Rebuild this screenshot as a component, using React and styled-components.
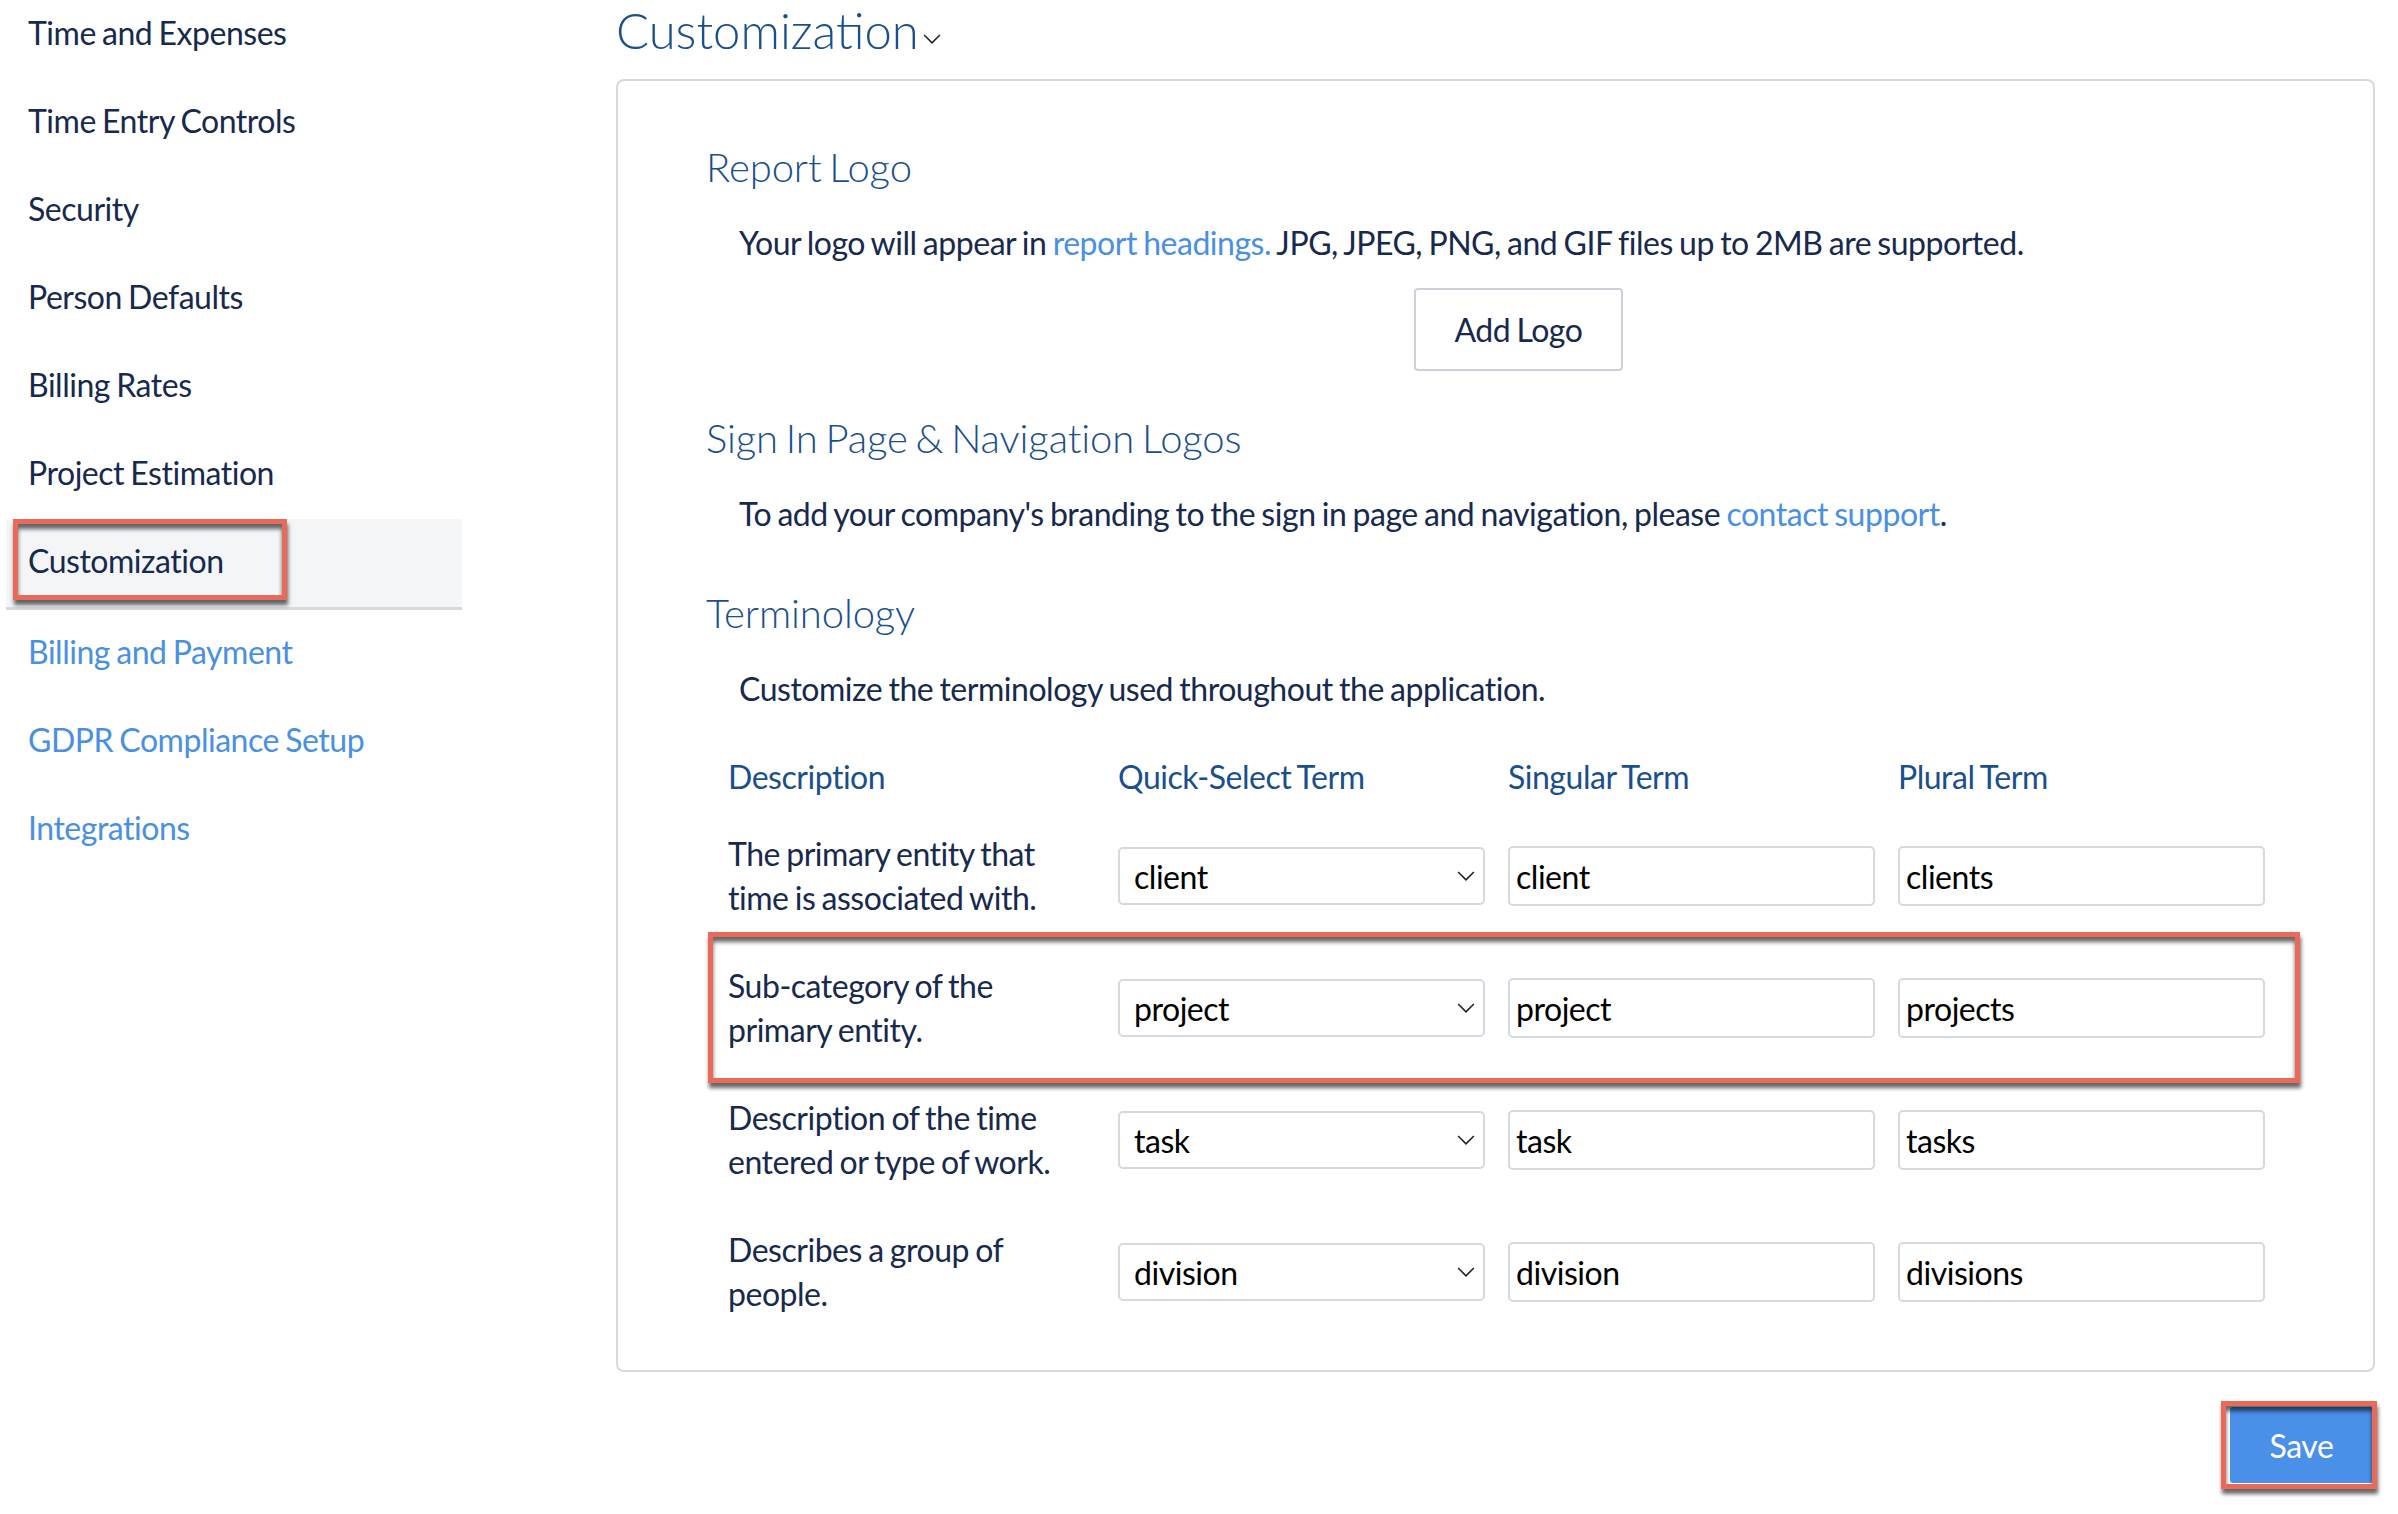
import React from 'react'
import styled, { createGlobalStyle } from 'styled-components'

const GlobalStyle = createGlobalStyle`
  html, body {
    margin: 0;
    background: #fff;
    overflow: hidden;
  }
  body {
    font-family: Lato, "Open Sans", sans-serif;
    font-size: 32px;
    letter-spacing: -0.47px;
    word-spacing: -1.5px;
    color: #17294d;
  }
`

const Page = styled.div`
  display: flex;
  align-items: flex-start;
  width: 2398px;
  height: 1514px;
  overflow: hidden;
`
const Sidebar = styled.nav`
  width: 456px;
  margin: -9px 0 0 6px;
  flex-shrink: 0;
`
const NavItem = styled.a`
  position: relative;
  display: flex;
  align-items: center;
  box-sizing: border-box;
  height: ${p => (p.$active ? 91 : 88)}px;
  padding: 0 0 5px 22px;
  color: ${p => (p.$link ? '#4a90e2' : '#17294d')};
  ${p => p.$active && `
    background: #f4f5f7;
    border-bottom: 3px solid #d5d9e0;
  `}
`
const Main = styled.main`
  width: 1759px;
  margin-left: 154px;
`
const PageTitle = styled.div`
  display: flex;
  align-items: center;
  gap: 4px;
  box-sizing: border-box;
  height: 96px;
  margin-top: -17px;
  padding-bottom: 3px;
  font-size: 49px;
  font-weight: 300;
  letter-spacing: 0;
  color: #1a4f8e;
  svg {
    margin-top: 19px;
  }
`
const Panel = styled.section`
  box-sizing: border-box;
  height: 1293px;
  padding: 57px 0 0 88px;
  border: 2px solid #d5d9e0;
  border-radius: 8px;
`
const SectionTitle = styled.h2`
  height: 60px;
  margin: ${p => p.$top || 0}px 0 0;
  font-size: 40px;
  font-weight: 300;
  line-height: 58px;
  letter-spacing: -0.1px;
  word-spacing: -3px;
  color: #1a4f8e;
`
const Para = styled.p`
  margin: 23px 0 0 33px;
  line-height: 44px;
`
const Link = styled.a`
  color: #4a90e2;
`
const ButtonRow = styled.div`
  display: flex;
  justify-content: center;
  width: 1625px;
  margin-top: 23px;
`
const GhostButton = styled.button`
  width: 209px;
  height: 83px;
  background: #fff;
  border: 2px solid #ccd1d9;
  border-radius: 4px;
  font: inherit;
  letter-spacing: inherit;
  word-spacing: inherit;
  color: #17294d;
`
const Table = styled.div`
  margin: 44px 0 0 22px;
`
const Row = styled.div`
  position: relative;
  display: grid;
  grid-template-columns: repeat(4, 367px);
  column-gap: 23px;
  align-items: center;
  height: ${p => p.$height || 132}px;
  margin-bottom: ${p => p.$gap || 0}px;
`
const HeadCell = styled.div`
  line-height: 44px;
  color: #1a4f8e;
`
const Describe = styled.div`
  line-height: 44px;
`
const SelectWrap = styled.div`
  position: relative;
  svg {
    position: absolute;
    top: 24px;
    right: 10px;
    pointer-events: none;
  }
`
const Select = styled.select`
  display: block;
  box-sizing: border-box;
  width: 100%;
  height: 58px;
  padding: 0 14px;
  appearance: none;
  background: #fff;
  border: 2px solid #d5d9e0;
  border-radius: 5px;
  font: inherit;
  letter-spacing: inherit;
  color: #000;
`
const Input = styled.input`
  display: block;
  box-sizing: border-box;
  width: 100%;
  height: 60px;
  padding: 0 6px;
  background: #fff;
  border: 2px solid #d5d9e0;
  border-radius: 5px;
  font: inherit;
  letter-spacing: inherit;
  color: #000;
`
const Footer = styled.div`
  display: flex;
  justify-content: flex-end;
  margin-top: 35px;
`
const SaveButton = styled.button`
  display: block;
  width: 143px;
  height: 76px;
  background: #4a90e8;
  border: 0;
  border-radius: 3px;
  font: inherit;
  letter-spacing: inherit;
  color: #fff;
`
const SaveWrap = styled.div`
  position: relative;
  margin-right: 2px;
`
// red markers drawn on top of the screenshot
const Marker = styled.div`
  position: absolute;
  box-sizing: border-box;
  top: ${p => p.$top}px;
  left: ${p => p.$left}px;
  width: ${p => p.$width}px;
  height: ${p => p.$height}px;
  border: 5px solid #ea6a5a;
  pointer-events: none;
  box-shadow: 1px 5px 4px rgba(0, 0, 0, .6), inset 0 5px 4px rgba(0, 0, 0, .6);
`

const Chevron = ({ size = 18 }) => (
  <svg width={size} height={size * 0.6} viewBox="0 0 18 11" fill="none" stroke="#222" strokeWidth="1.6">
    <path d="M1 1l8 8 8-8" />
  </svg>
)

const navItems = [
  'Time and Expenses',
  'Time Entry Controls',
  'Security',
  'Person Defaults',
  'Billing Rates',
  'Project Estimation',
]
const linkItems = ['Billing and Payment', 'GDPR Compliance Setup', 'Integrations']

const terms = [
  { text: ['The primary entity that', 'time is associated with.'], one: 'client', many: 'clients' },
  { text: ['Sub-category of the', 'primary entity.'], one: 'project', many: 'projects', marked: true },
  { text: ['Description of the time', 'entered or type of work.'], one: 'task', many: 'tasks' },
  { text: ['Describes a group of', 'people.'], one: 'division', many: 'divisions' },
]

export default function App() {
  return (
    <Page>
      <GlobalStyle />
      <Sidebar>
        {navItems.map(item => <NavItem key={item}>{item}</NavItem>)}
        <NavItem $active>
          Customization
          <Marker $top={0} $left={7} $width={274} $height={81} />
        </NavItem>
        {linkItems.map(item => <NavItem key={item} $link>{item}</NavItem>)}
      </Sidebar>
      <Main>
        <PageTitle>Customization <Chevron /></PageTitle>
        <Panel>
          <SectionTitle>Report Logo</SectionTitle>
          <Para>
            Your logo will appear in <Link>report headings.</Link> JPG, JPEG, PNG, and GIF files up to 2MB are supported.
          </Para>
          <ButtonRow><GhostButton>Add Logo</GhostButton></ButtonRow>
          <SectionTitle $top={38}>Sign In Page &amp; Navigation Logos</SectionTitle>
          <Para>
            To add your company's branding to the sign in page and navigation, please <Link>contact support</Link>.
          </Para>
          <SectionTitle $top={48}>Terminology</SectionTitle>
          <Para>Customize the terminology used throughout the application.</Para>
          <Table>
            <Row $height={44} $gap={11}>
              <HeadCell>Description</HeadCell>
              <HeadCell>Quick-Select Term</HeadCell>
              <HeadCell>Singular Term</HeadCell>
              <HeadCell>Plural Term</HeadCell>
            </Row>
            {terms.map(t => (
              <Row key={t.one}>
                <Describe>{t.text[0]}<br />{t.text[1]}</Describe>
                <SelectWrap>
                  <Select defaultValue={t.one}><option>{t.one}</option></Select>
                  <Chevron />
                </SelectWrap>
                <Input defaultValue={t.one} />
                <Input defaultValue={t.many} />
                {t.marked && <Marker $top={-10} $left={-20} $width={1592} $height={151} />}
              </Row>
            ))}
          </Table>
        </Panel>
        <Footer>
          <SaveWrap>
            <SaveButton>Save</SaveButton>
            <Marker $top={-6} $left={-9} $width={156} $height={88} />
          </SaveWrap>
        </Footer>
      </Main>
    </Page>
  )
}
